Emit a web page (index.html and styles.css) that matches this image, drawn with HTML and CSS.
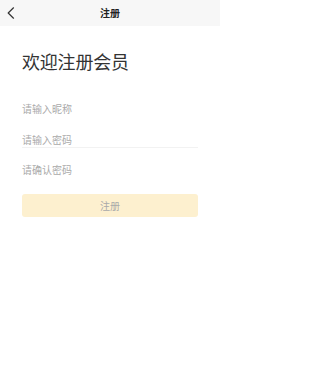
FILE: index.html
```html
<!DOCTYPE html>
<html lang="zh-CN">
<head>
<meta charset="utf-8">
<title>注册</title>
<link rel="stylesheet" href="styles.css">
</head>
<body>
<div class="page">
  <header class="nav">
    <span class="back">
      <svg width="8" height="12" viewBox="0 0 8 12"><polyline points="6.5,0.8 1.2,6 6.5,11.2" fill="none" stroke="#333" stroke-width="1.2" stroke-linecap="round" stroke-linejoin="round"/></svg>
    </span>
    <span class="nav-title">注册</span>
  </header>
  <main class="content">
    <h1 class="heading">欢迎注册会员</h1>
    <div class="form">
      <div class="field">请输入昵称</div>
      <div class="field field-line">请输入密码</div>
      <div class="field">请确认密码</div>
    </div>
    <div class="btn">注册</div>
  </main>
</div>
</body>
</html>
```
FILE: styles.css
```css
* { box-sizing: border-box; }
html, body {
  margin: 0;
  padding: 0;
  background: #fff;
  font-family: "Noto Sans CJK SC", "Noto Sans", sans-serif;
  color: #333;
}
.page {
  width: 220px;
  min-height: 389px;
}
.nav {
  height: 26px;
  background: #f7f7f7;
  display: flex;
  align-items: center;
  justify-content: center;
  position: relative;
}
.back {
  position: absolute;
  left: 7px;
  top: 7px;
  width: 8px;
  height: 12px;
  display: flex;
}
.nav-title {
  font-size: 10px;
  font-weight: bold;
  color: #222;
  line-height: 14px;
}
.content {
  padding: 0 22px;
}
.heading {
  margin: 23px 0 0;
  font-size: 18px;
  font-weight: normal;
  line-height: 24px;
  color: #333;
  letter-spacing: -0.2px;
}
.form {
  margin-top: 29px;
  display: flex;
  flex-direction: column;
  gap: 15.5px;
}
.field {
  height: 15px;
  font-size: 10px;
  line-height: 14px;
  color: #aaa;
  border-bottom: 1px solid transparent;
}
.field-line {
  border-bottom-color: #f2f2f2;
}
.btn {
  margin-top: 16px;
  height: 23px;
  border-radius: 3px;
  background: #fdf0cf;
  color: #aaa;
  font-size: 10px;
  display: flex;
  align-items: center;
  justify-content: center;
}
```
